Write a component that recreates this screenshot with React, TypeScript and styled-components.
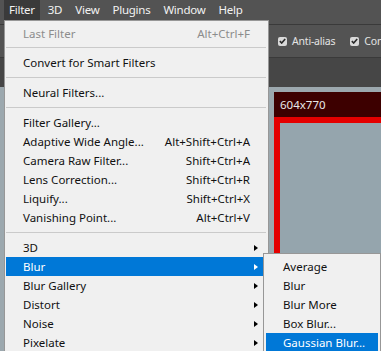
import React from "react";
import styled, { createGlobalStyle } from "styled-components";

const GlobalStyle = createGlobalStyle`
  html, body {
    margin: 0;
    padding: 0;
    background: #424242;
    overflow: hidden;
  }
`;

type Item =
  | { kind: "sep"; gap: number }
  | { kind: "item"; label: string; shortcut?: string; sub?: boolean; disabled?: boolean; active?: boolean };

const filterItems: Item[] = [
  { kind: "item", label: "Last Filter", shortcut: "Alt+Ctrl+F", disabled: true },
  { kind: "sep", gap: 10 },
  { kind: "item", label: "Convert for Smart Filters" },
  { kind: "sep", gap: 11 },
  { kind: "item", label: "Neural Filters..." },
  { kind: "sep", gap: 11 },
  { kind: "item", label: "Filter Gallery..." },
  { kind: "item", label: "Adaptive Wide Angle...", shortcut: "Alt+Shift+Ctrl+A" },
  { kind: "item", label: "Camera Raw Filter...", shortcut: "Shift+Ctrl+A" },
  { kind: "item", label: "Lens Correction...", shortcut: "Shift+Ctrl+R" },
  { kind: "item", label: "Liquify...", shortcut: "Shift+Ctrl+X" },
  { kind: "item", label: "Vanishing Point...", shortcut: "Alt+Ctrl+V" },
  { kind: "sep", gap: 11 },
  { kind: "item", label: "3D", sub: true },
  { kind: "item", label: "Blur", sub: true, active: true },
  { kind: "item", label: "Blur Gallery", sub: true },
  { kind: "item", label: "Distort", sub: true },
  { kind: "item", label: "Noise", sub: true },
  { kind: "item", label: "Pixelate", sub: true },
];

const blurItems = ["Average", "Blur", "Blur More", "Box Blur...", "Gaussian Blur..."];

const menus = ["Filter", "3D", "View", "Plugins", "Window", "Help"];

const Check = () => (
  <CheckBox>
    <svg width="7" height="6" viewBox="0 0 7 6">
      <path d="M0.8 3.1 L2.7 5 L6.2 0.9" fill="none" stroke="#2a2a2a" strokeWidth="1.6" />
    </svg>
  </CheckBox>
);

const App: React.FC = () => {
  return (
    <>
      <GlobalStyle />
      <Screen>
        <MenuBar>
          {menus.map((m) => (
            <MenuTitle key={m} $open={m === "Filter"}>{m}</MenuTitle>
          ))}
        </MenuBar>
        <OptionsBar>
          <Option>
            <Check />
            Anti-alias
          </Option>
          <Option>
            <Check />
            Contiguous
          </Option>
        </OptionsBar>
        <TabStrip />
        <Canvas>
          <Doc>
            <DocHeader>604x770</DocHeader>
            <DocBody />
          </Doc>
        </Canvas>

        <Dropdown>
          {filterItems.map((it, i) =>
            it.kind === "sep" ? (
              <Separator key={i} $gap={it.gap} />
            ) : (
              <Row key={i} $active={it.active} $disabled={it.disabled}>
                <span>{it.label}</span>
                {it.shortcut && <Shortcut>{it.shortcut}</Shortcut>}
                {it.sub && <Arrow $active={it.active} />}
              </Row>
            )
          )}
        </Dropdown>

        <SubMenu>
          {blurItems.map((b) => (
            <Row key={b} $active={b === "Gaussian Blur..."}>
              <span>{b}</span>
            </Row>
          ))}
        </SubMenu>
      </Screen>
    </>
  );
};

const Screen = styled.div`
  position: relative;
  width: 381px;
  height: 351px;
  overflow: hidden;
  display: flex;
  flex-direction: column;
  font-family: "Noto Sans", "Liberation Sans", sans-serif;
  font-size: 11.5px;
`;

const MenuBar = styled.div`
  height: 24px;
  flex-shrink: 0;
  background: #535353;
  display: flex;
  align-items: flex-start;
  padding-left: 4px;
  gap: 3px;
`;

const MenuTitle = styled.div<{ $open?: boolean }>`
  height: 20px;
  line-height: 20px;
  padding: 0 5px;
  color: #f2f2f2;
  font-size: 11.5px;
  letter-spacing: -0.25px;
  background: ${(p) => (p.$open ? "#3a3a3a" : "transparent")};
`;

const OptionsBar = styled.div`
  height: 32px;
  flex-shrink: 0;
  background: #535353;
  border-top: 1px solid #3a3a3a;
  border-bottom: 1px solid #3a3a3a;
  display: flex;
  align-items: center;
  padding-left: 278px;
  gap: 15px;
  white-space: nowrap;
`;

const Option = styled.div`
  display: flex;
  align-items: center;
  gap: 5px;
  color: #e4e4e4;
  font-size: 10.5px;
  letter-spacing: -0.2px;
`;

const CheckBox = styled.span`
  width: 9px;
  height: 9px;
  border-radius: 2px;
  background: #d9d9d9;
  display: flex;
  align-items: center;
  justify-content: center;
`;

const TabStrip = styled.div`
  height: 29px;
  flex-shrink: 0;
  background: #464646;
`;

const Canvas = styled.div`
  flex: 1;
  background: #9ca8ae;
  padding: 5px 0 0 274px;
  display: flex;
`;

const Doc = styled.div`
  flex: 1;
  display: flex;
  flex-direction: column;
`;

const DocHeader = styled.div`
  height: 25px;
  flex-shrink: 0;
  background: #3d0000;
  color: #e8e8e8;
  padding-left: 6px;
  line-height: 25px;
  font-size: 11.5px;
`;

const DocBody = styled.div`
  flex: 1;
  background: #95a5ad;
  border-top: 6px solid #e40000;
  border-left: 6px solid #e40000;
`;

const Dropdown = styled.div`
  position: absolute;
  left: 4px;
  top: 20px;
  width: 265px;
  height: 340px;
  box-sizing: border-box;
  background: #f0f0f0;
  border: 1px solid #979797;
  padding: 3px 1px 0 1px;
`;

const SubMenu = styled.div`
  position: absolute;
  left: 263px;
  top: 253px;
  width: 118px;
  height: 110px;
  box-sizing: border-box;
  background: #f0f0f0;
  border: 1px solid #979797;
  padding: 3px 2px 0 2px;
`;

const Row = styled.div<{ $active?: boolean; $disabled?: boolean }>`
  height: 19px;
  display: flex;
  align-items: center;
  padding: 0 17px;
  white-space: nowrap;
  color: ${(p) => (p.$active ? "#ffffff" : p.$disabled ? "#8c8c8c" : "#111111")};
  background: ${(p) => (p.$active ? "#0078d7" : "transparent")};
`;

const Shortcut = styled.span`
  margin-left: auto;
`;

const Arrow = styled.span<{ $active?: boolean }>`
  margin-left: auto;
  margin-right: -8px;
  width: 0;
  height: 0;
  border-top: 3.5px solid transparent;
  border-bottom: 3.5px solid transparent;
  border-left: 4px solid ${(p) => (p.$active ? "#ffffff" : "#000000")};
`;

const Separator = styled.div<{ $gap: number }>`
  height: 1px;
  background: #cacaca;
  margin: ${(p) => Math.floor((p.$gap - 1) / 2)}px 1px ${(p) => Math.ceil((p.$gap - 1) / 2)}px 0;
`;

export default App;
